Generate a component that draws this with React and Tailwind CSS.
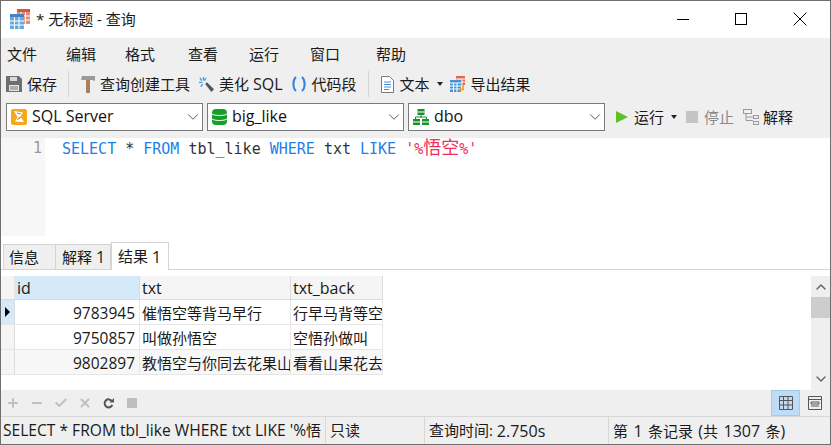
import { Check, ChevronDown, ChevronUp, Minus, Plus, X } from "lucide-react";

const font = "font-['Open_Sans','Noto_Sans_CJK_SC',sans-serif]";

function AppIcon() {
  return (
    <svg width="21" height="21" viewBox="0 0 21 21">
      <rect x="7" y="0" width="13" height="15" fill="#e58b7c" />
      <path d="M7 0h13v3H7z" fill="#d5573f" />
      <path d="M11 3v12M15.500 3v12M7 7h13M7 11h13" stroke="#fff" strokeWidth="1" />
      <rect x="0" y="5" width="14" height="15" fill="#6aa7dc" />
      <path d="M0 5h14v3H0z" fill="#3f85c5" />
      <path d="M4.500 8v12M9 8v12M0 12h14M0 16h14" stroke="#fff" strokeWidth="1" />
    </svg>
  );
}

function SaveIcon() {
  return (
    <svg width="16" height="16" viewBox="0 0 16 16">
      <path d="M0 0h13l3 3v13H0z" fill="#6f6f6f" />
      <rect x="4" y="1" width="7" height="4" fill="#d9d9d9" />
      <rect x="3" y="9" width="10" height="6" fill="#e6e6e6" />
      <path d="M4 11h8M4 13h8" stroke="#777" />
    </svg>
  );
}

function HammerIcon() {
  return (
    <svg width="14" height="17" viewBox="0 0 14 17">
      <path d="M1 0h13v5l-3-1H0z" fill="#9a9a9a" />
      <rect x="5" y="4" width="4" height="13" fill="#a5805e" />
    </svg>
  );
}

function WandIcon() {
  return (
    <svg width="15" height="15" viewBox="0 0 17 17">
      <path d="M7 8l2-2 8 8-3 3z" fill="#555" />
      <path d="M5 0v4M1 1l2 3M0 6h4M2 11l2-3M8 1L6 4" stroke="#3f9fe0" strokeWidth="1.500" />
    </svg>
  );
}

function BracesIcon() {
  return (
    <svg width="16" height="16" viewBox="0 0 16 16" fill="none" stroke="#2f86e0" strokeWidth="2">
      <path d="M5 1C1.500 4 1.500 12 5 15" />
      <path d="M11 1c3.500 3 3.500 11 0 14" />
    </svg>
  );
}

function DocIcon() {
  return (
    <svg width="13" height="17" viewBox="0 0 13 17">
      <path d="M.500.500h8l4 4v12H.500z" fill="#fff" stroke="#777" />
      <path d="M3 6h7M3 8.500h7M3 11h7M3 13.500h5" stroke="#4a90d9" />
    </svg>
  );
}

function ExportIcon() {
  return (
    <svg width="16" height="16" viewBox="0 0 16 16">
      <rect x="6" y="0" width="9" height="9" fill="#e0674c" />
      <path d="M9 3v6M12 3v6M6 3h9M6 6h9" stroke="#fff" />
      <rect x="0" y="4" width="11" height="12" fill="#4a90d0" />
      <path d="M3.500 7v9M7 7v9M0 7h11M0 10h11M0 13h11" stroke="#fff" />
      <path d="M13 9v4.500h-3" fill="none" stroke="#f5a623" strokeWidth="1.800" />
      <path d="M8 13.500l2.500-2v4z" fill="#f5a623" />
    </svg>
  );
}

function ServerIcon() {
  return (
    <svg width="16" height="16" viewBox="0 0 16 16">
      <rect width="16" height="16" rx="2" fill="#f5a81c" />
      <path d="M3 2l9 1.500-2.500 4L13 13l-9-.5 2.500-4.500z" fill="#fff" />
      <path d="M6 4l4 1M6 11l4-3M8 8v2" stroke="#d08a14" />
    </svg>
  );
}

function DbIcon() {
  return (
    <svg width="15" height="16" viewBox="0 0 15 16">
      <rect x="0" y="0" width="15" height="16" rx="4" fill="#16a02a" />
      <path d="M0 5c3 2 12 2 15 0M0 10c3 2 12 2 15 0" fill="none" stroke="#fff" />
    </svg>
  );
}

function SchemaIcon() {
  return (
    <svg width="16" height="16" viewBox="0 0 16 16">
      <rect x="4.500" y="0" width="7" height="6" fill="#16912a" />
      <path d="M8 6v3M2.500 10V8h11v2" fill="none" stroke="#16912a" />
      <rect x="0" y="10" width="7" height="6" fill="#16912a" />
      <rect x="9" y="10" width="7" height="6" fill="#16912a" />
      <path d="M4.500 3h7M0 13h7M9 13h7" stroke="#fff" />
    </svg>
  );
}

function ExplainIcon() {
  return (
    <svg width="16" height="16" viewBox="0 0 16 16" fill="none" stroke="#9a9a9a">
      <rect x=".500" y=".500" width="8" height="4" />
      <rect x="10.500" y="6.500" width="5" height="3" />
      <rect x="10.500" y="12.500" width="5" height="3" />
      <path d="M3 5v6.500h7M3 8h7" />
    </svg>
  );
}

function RefreshIcon() {
  return (
    <svg width="11" height="11" viewBox="0 0 11 11" className="ml-[11px]">
      <path d="M9 3.200A4 4 0 1 0 9.300 7" fill="none" stroke="#555" strokeWidth="2" />
      <path d="M6.500 4.500H11V0z" fill="#555" />
    </svg>
  );
}

function Tool({ icon, label, className = "" }) {
  return (
    <div className={`flex items-center gap-[5px] ${className}`}>
      {icon}
      <span>{label}</span>
    </div>
  );
}

function Caret() {
  return <span className="ml-[7px] h-0 w-0 border-x-[3px] border-t-[4px] border-x-transparent border-t-[#222]" />;
}

function Latin({ children, className = "text-[16px]" }) {
  return <span className={className}>{children}</span>;
}

function Combo({ icon, label, className }) {
  return (
    <div className={`flex h-[28px] items-center border border-[#7a7a7a] bg-white pl-[4px] ${className}`}>
      {icon}
      <span className="ml-[5px] flex-1 pb-[2px] text-[16px] leading-none text-[#111]">{label}</span>
      <ChevronDown size={18} strokeWidth={1.300} className="text-[#555]" />
    </div>
  );
}

const rows = [
  ["9783945", "催悟空等背马早行", "行早马背等空"],
  ["9750857", "叫做孙悟空", "空悟孙做叫"],
  ["9802897", "教悟空与你同去花果山", "看看山果花去"],
];

export default function App() {
  return (
    <div className={`flex h-[445px] w-[831px] flex-col overflow-hidden border border-[#6f6f6f] bg-[#efefef] text-[15px] text-[#1a1a1a] ${font}`}>
      <div className="flex h-[37px] shrink-0 items-center bg-white pb-[1px] pl-[9px]">
        <AppIcon />
        <span className="ml-[5px] flex-1">* 无标题 - 查询</span>
        <div className="h-px w-[12px] bg-black" />
        <div className="ml-[46px] h-[12px] w-[12px] border border-black" />
        <svg width="14" height="14" viewBox="0 0 14 14" stroke="#000" className="ml-[46px] mr-[23px]">
          <path d="M.500.500l13 13M13.500.500l-13 13" />
        </svg>
      </div>

      <div className="flex h-[33px] shrink-0 items-center pb-[1px] pl-[6px]">
        <span className="w-[59px]">文件</span>
        <span className="w-[59px]">编辑</span>
        <span className="w-[63px]">格式</span>
        <span className="w-[61px]">查看</span>
        <span className="w-[61px]">运行</span>
        <span className="w-[66px]">窗口</span>
        <span>帮助</span>
      </div>

      <div className="flex h-[27px] shrink-0 items-center pb-[1px] pl-[5px]">
        <Tool icon={<SaveIcon />} label="保存" className="gap-[4px]" />
        <div className="ml-[11px] h-[26px] w-px bg-[#d5d5d5]" />
        <Tool icon={<HammerIcon />} label="查询创建工具" className="ml-[12px]" />
        <Tool icon={<WandIcon />} label={<>美化 <Latin>SQL</Latin></>} className="ml-[9px] gap-0" />
        <Tool icon={<BracesIcon />} label="代码段" className="ml-[8px] gap-[4px]" />
        <div className="ml-[11px] h-[26px] w-px bg-[#d5d5d5]" />
        <Tool icon={<DocIcon />} label="文本" className="ml-[12px] gap-[6px]" />
        <Caret />
        <Tool icon={<ExportIcon />} label="导出结果" className="ml-[7px] gap-[4px]" />
      </div>

      <div className="mt-[5px] flex h-[28px] shrink-0 items-center pl-[5px]">
        <Combo icon={<ServerIcon />} label="SQL Server" className="w-[197px]" />
        <Combo icon={<DbIcon />} label="big_like" className="ml-[4px] w-[197px]" />
        <Combo icon={<SchemaIcon />} label="dbo" className="ml-[4px] w-[197px]" />
        <div className="ml-[11px] h-0 w-0 border-y-[6px] border-l-[12px] border-y-transparent border-l-[#5fbf2a]" />
        <span className="ml-[6px]">运行</span>
        <Caret />
        <div className="ml-[9px] h-[12px] w-[12px] bg-[#c4c4c4]" />
        <span className="ml-[6px] text-[#8a8a8a]">停止</span>
        <div className="ml-[9px] flex items-center gap-[4px]">
          <ExplainIcon />
          <span>解释</span>
        </div>
      </div>

      <div className="mt-[7px] flex h-[98px] shrink-0 bg-white">
        <div className="w-[44px] bg-[#f7f7f7] pr-[3px] text-right font-['DejaVu_Sans_Mono'] text-[15px] leading-[20px] text-[#9a9a9a]">1</div>
        <div className="whitespace-pre pl-[17px] font-['DejaVu_Sans_Mono','Noto_Sans_CJK_SC',monospace] text-[15px] leading-[20px] text-[#333]">
          <span className="text-[#1f7fe8]">SELECT</span> * <span className="text-[#1f7fe8]">FROM</span> tbl_like <span className="text-[#1f7fe8]">WHERE</span> txt <span className="text-[#1f7fe8]">LIKE</span> <span className="text-[#f0305a]">'%<span className="text-[18px]">悟空</span>%'</span>
        </div>
      </div>

      <div className="flex h-[34px] shrink-0 items-end border-b border-[#d4d4d4] bg-white pl-[2px]">
        <div className="mb-[-1px] flex h-[26px] w-[53px] items-center border border-[#d4d4d4] bg-[#efefef] pl-[5px]">信息</div>
        <div className="mb-[-1px] flex h-[26px] w-[55px] items-center whitespace-pre border-y border-r border-[#d4d4d4] bg-[#efefef] pl-[6px]">解释 <Latin>1</Latin></div>
        <div className="mb-[-1px] flex h-[28px] w-[58px] items-center whitespace-pre border-x border-t border-[#d4d4d4] bg-white pl-[6px]">结果 <Latin>1</Latin></div>
      </div>

      <div className="flex h-[120px] shrink-0 bg-white">
        <div className="mt-[6px] flex-1">
          <div className="flex h-[24px] w-[382px] border-b border-[#dcdcdc] text-[16px]">
            <div className="w-[14px] border-r border-[#e5e5e5] bg-[#f5f5f5]" />
            <div className="flex w-[125px] items-center border-r border-[#dcdcdc] bg-[#d6e9f8] pl-[2px]">id</div>
            <div className="flex w-[151px] items-center border-r border-[#dcdcdc] bg-[#f5f5f5] pl-[2px]">txt</div>
            <div className="flex w-[92px] items-center border-r border-[#dcdcdc] bg-[#f5f5f5] pl-[2px]">txt_back</div>
          </div>
          {rows.map((row, i) => (
            <div key={row[0]} className={`flex h-[25px] w-[382px] border-b border-[#e6e6e6] ${i === 2 ? "bg-[#f7f7f7]" : "bg-white"}`}>
              <div className={`flex w-[14px] items-center justify-center border-r border-[#dcdcdc] ${i === 0 ? "bg-[#d6e9f8]" : "bg-[#f5f5f5]"}`}>
                {i === 0 && <span className="h-0 w-0 border-y-[5px] border-l-[5px] border-y-transparent border-l-black" />}
              </div>
              <div className="flex w-[125px] items-center justify-end border-r border-[#e6e6e6] pr-[4px] pt-[3px] text-[15.500px]">{row[0]}</div>
              <div className="flex w-[151px] items-center overflow-hidden whitespace-nowrap border-r border-[#e6e6e6] pl-[2px] pt-[2px]">{row[1]}</div>
              <div className="flex w-[92px] items-center overflow-hidden whitespace-nowrap border-r border-[#e6e6e6] pl-[2px] pt-[2px]">{row[2]}</div>
            </div>
          ))}
        </div>
        <div className="mt-[6px] flex w-[19px] flex-col items-center bg-[#efefef]">
          <ChevronUp size={16} strokeWidth={2} className="mt-[3px] text-[#606060]" />
          <div className="mt-[2px] h-[21px] w-full bg-[#cdcdcd]" />
          <ChevronDown size={16} strokeWidth={2} className="mt-auto mb-[3px] text-[#606060]" />
        </div>
      </div>

      <div className="flex h-[27px] shrink-0 items-center border-b border-[#d8d8d8] pl-[5px]">
        <Plus size={14} strokeWidth={3.500} className="text-[#c0c0c0]" />
        <Minus size={14} strokeWidth={3.500} className="ml-[10px] text-[#c0c0c0]" />
        <Check size={14} strokeWidth={3.500} className="ml-[10px] text-[#c0c0c0]" />
        <X size={14} strokeWidth={3.500} className="ml-[10px] text-[#c0c0c0]" />
        <RefreshIcon />
        <div className="ml-[13px] h-[10px] w-[10px] bg-[#bdbdbd]" />
        <div className="ml-auto flex h-[26px] w-[29px] items-center justify-center border border-[#9fcdf0] bg-[#bedcf5]">
          <svg width="14" height="14" viewBox="0 0 14 14" fill="none" stroke="#555">
            <path d="M.500.500h13v13H.500zM.500 4.500h13M.500 9h13M4.500.500v13M9 .500v13" />
          </svg>
        </div>
        <div className="mr-[1px] flex h-[26px] w-[29px] items-center justify-center">
          <svg width="14" height="14" viewBox="0 0 14 14" fill="none" stroke="#555">
            <path d="M.500.500h13v13H.500zM.500 3.500h13M3 6h8v2H3zM3 10h8" />
          </svg>
        </div>
      </div>

      <div className="flex flex-1 items-center">
        <div className="flex h-full w-[325px] items-center overflow-hidden whitespace-pre border-r border-[#d8d8d8] pl-[2px]">
          <Latin className="text-[15.600px]">SELECT * FROM tbl_like WHERE txt LIKE '%</Latin>悟
        </div>
        <div className="flex h-full w-[99px] items-center border-r border-[#d8d8d8] pl-[4px]">只读</div>
        <div className="flex h-full w-[184px] items-center whitespace-pre border-r border-[#d8d8d8] pl-[4px]">查询时间: <Latin>2.750s</Latin></div>
        <div className="whitespace-pre pl-[4px] [word-spacing:1.500px]">第 <Latin>1</Latin> 条记录 <Latin>(</Latin>共 <Latin>1307</Latin> 条<Latin>)</Latin></div>
      </div>
    </div>
  );
}
